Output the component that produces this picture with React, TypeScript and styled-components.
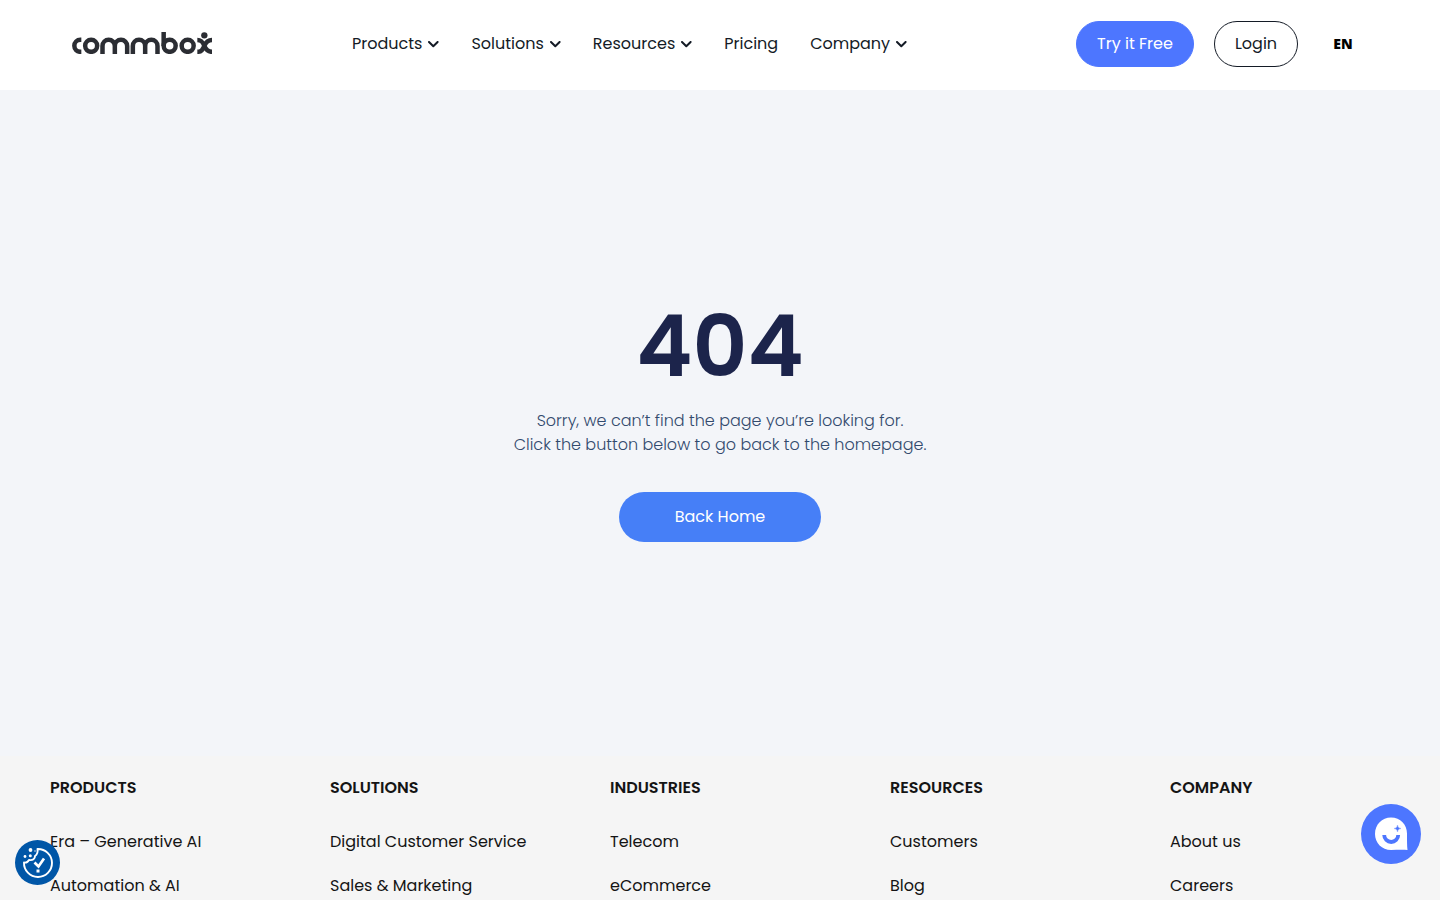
import React from "react";
import styled, { createGlobalStyle } from "styled-components";

const GlobalStyle = createGlobalStyle`
  *, *::before, *::after { box-sizing: border-box; }
  body {
    margin: 0;
    background: #f5f5f5;
    color: #141b26;
    font-family: Poppins, Inter, sans-serif;
    font-size: 16px;
    line-height: 24px;
  }
  a { color: inherit; text-decoration: none; }
  h1, h2, p, ul { margin: 0; padding: 0; }
  ul { list-style: none; }
`;

const Header = styled.header`
  display: flex;
  align-items: center;
  height: 90px;
  padding: 0 72px 2px;
  background: #fff;
`;

const LogoLink = styled.a`
  display: block;
  width: 140px;
  height: 24px;
`;

const Nav = styled.nav`
  margin-left: 140px;
`;

const NavList = styled.ul`
  display: flex;
  gap: 32px;
`;

const NavButton = styled.button`
  display: flex;
  align-items: center;
  gap: 6px;
  padding: 0;
  border: 0;
  background: none;
  color: inherit;
  font: inherit;
  cursor: pointer;
`;

const Actions = styled.div`
  display: flex;
  align-items: center;
  gap: 20px;
  margin-left: auto;
`;

const PillLink = styled.a<{ $filled?: boolean }>`
  display: flex;
  align-items: center;
  justify-content: center;
  height: 46px;
  width: ${(p) => (p.$filled ? 118 : 84)}px;
  border: 1px solid ${(p) => (p.$filled ? "#4d76ff" : "#141b26")};
  border-radius: 23px;
  background: ${(p) => (p.$filled ? "#4d76ff" : "#fff")};
  color: ${(p) => (p.$filled ? "#fff" : "#141b26")};
`;

const LanguageLink = styled.a`
  width: 50px;
  color: #000;
  font: 900 14px/24px "Noto Sans", sans-serif;
  text-align: center;
`;

const Main = styled.main`
  display: flex;
  flex-direction: column;
  align-items: center;
  justify-content: center;
  min-height: 666px;
  padding: 40px 20px;
  background: #f3f5f9;
  text-align: center;
`;

const Code = styled.h1`
  color: #1c244b;
  font-size: 85px;
  font-weight: 600;
  line-height: 85px;
`;

const Message = styled.p`
  margin-top: 20px;
  color: #324a6d;
  font-weight: 300;
`;

const HomeLink = styled.a`
  display: flex;
  align-items: center;
  justify-content: center;
  width: 202px;
  height: 50px;
  margin-top: 35px;
  border-radius: 25px;
  background: #467ff7;
  color: #fff;
`;

const Footer = styled.footer`
  display: grid;
  grid-template-columns: repeat(5, 1fr);
  column-gap: 60px;
  padding: 20px 50px;
  background: #f5f5f5;
  color: #141414;
`;

const FooterTitle = styled.h2`
  font-size: 16px;
  font-weight: 600;
  line-height: 24px;
`;

const FooterList = styled.ul`
  display: flex;
  flex-direction: column;
  gap: 20px;
  margin-top: 30px;
`;

const FloatingButton = styled.button`
  position: fixed;
  padding: 0;
  border: 0;
  border-radius: 50%;
  cursor: pointer;
  svg { display: block; }
`;

const CookieButton = styled(FloatingButton)`
  left: 15px;
  bottom: 15px;
  width: 45px;
  height: 45px;
  background: #0056a7;
`;

const ChatButton = styled(FloatingButton)`
  right: 19px;
  bottom: 36px;
  width: 60px;
  height: 60px;
  background: #4d76ff;
`;

const Logo = () => (
  <svg width="140" height="22" viewBox="36 36 420 66" fill="none" stroke="#2b2d33" strokeWidth="13.500" aria-hidden="true">
    <path d="M64 59.500H61A18 18 0 0 0 61 95.500H64" />
    <circle cx="93.500" cy="77.500" r="18" />
    <path d="M127.500 102V78a18.500 18.500 0 0 1 37 0V102M164.500 78a18.500 18.500 0 0 1 37 0V102" />
    <path d="M218.500 102V78a18.500 18.500 0 0 1 37 0V102M255.500 78a18.500 18.500 0 0 1 37 0V102" />
    <path d="M311 36V78" />
    <circle cx="329" cy="77.500" r="18" />
    <circle cx="383" cy="77.500" r="18" />
    <path d="M412 60C424 60 428 66 433 77.500S444 95.500 456 95.500M456 60C444 60 438 66 433 77.500S424 95.500 412 95.500" />
    <circle cx="433" cy="46" r="9.500" fill="#2b2d33" stroke="none" />
  </svg>
);

const Chevron = () => (
  <svg width="11" height="7" viewBox="0 0 11 7" fill="none" stroke="#141b26" strokeWidth="2" strokeLinecap="round" strokeLinejoin="round" aria-hidden="true">
    <path d="M1 1l4.300 4.300L9.600 1" />
  </svg>
);

const CookieIcon = () => (
  <svg width="45" height="45" viewBox="0 0 45 45" fill="none" aria-hidden="true">
    <path d="M22.500 9A14 14 0 1 1 9 22.500C12 23 13.500 21 14 20C18 20.500 20 19 20 16C23 14 23 12 22.500 9Z" stroke="#fff" strokeWidth="1.900" strokeLinejoin="round" />
    <path d="M19.500 22.500L23.500 26.500L29 18.500" stroke="#fff" strokeWidth="2.700" />
    <path d="M21.500 29.500h3v3h-3z" fill="#fff" />
    <g fill="#fff">
      <circle cx="15.500" cy="10" r="1.900" />
      <circle cx="10" cy="16.500" r="1.400" />
      <circle cx="15.300" cy="15.800" r="1.500" />
      <circle cx="20" cy="11" r="0.700" />
    </g>
  </svg>
);

const ChatIcon = () => (
  <svg width="60" height="60" viewBox="0 0 60 60" aria-hidden="true">
    <path d="M30 13.500C39.500 13.500 46 20.500 46 29.500C46 37 46 42 46.500 46C41 45.500 35 46 30 46C21 46 14 39 14 30C14 20.500 21 13.500 30 13.500Z" fill="#fff" />
    <path d="M23.200 31a7 7 0 0 0 14 0" fill="none" stroke="#4d76ff" strokeWidth="3.800" />
    <path d="M36.500 21Q36.700 24.300 40 24.500Q36.700 24.700 36.500 28Q36.300 24.700 33 24.500Q36.300 24.300 36.500 21Z" fill="#4d76ff" stroke="#4d76ff" strokeWidth="0.300" />
  </svg>
);

const menu = [
  { label: "Products", expands: true },
  { label: "Solutions", expands: true },
  { label: "Resources", expands: true },
  { label: "Pricing", expands: false },
  { label: "Company", expands: true },
];

const columns = [
  { title: "PRODUCTS", links: ["Era – Generative AI", "Automation & AI"] },
  { title: "SOLUTIONS", links: ["Digital Customer Service", "Sales & Marketing"] },
  { title: "INDUSTRIES", links: ["Telecom", "eCommerce"] },
  { title: "RESOURCES", links: ["Customers", "Blog"] },
  { title: "COMPANY", links: ["About us", "Careers"] },
];

export default function App() {
  return (
    <>
      <GlobalStyle />
      <Header>
        <LogoLink href="#" aria-label="commbox"><Logo /></LogoLink>
        <Nav aria-label="Main">
          <NavList>
            {menu.map((item) => (
              <li key={item.label}>
                {item.expands ? (
                  <NavButton type="button">{item.label}<Chevron /></NavButton>
                ) : (
                  <a href="#">{item.label}</a>
                )}
              </li>
            ))}
          </NavList>
        </Nav>
        <Actions>
          <PillLink href="#" $filled>Try it Free</PillLink>
          <PillLink href="#">Login</PillLink>
          <LanguageLink href="#">EN</LanguageLink>
        </Actions>
      </Header>
      <Main>
        <Code>404</Code>
        <Message>
          Sorry, we can’t find the page you’re looking for.<br />
          Click the button below to go back to the homepage.
        </Message>
        <HomeLink href="#">Back Home</HomeLink>
      </Main>
      <Footer>
        {columns.map((column) => (
          <section key={column.title}>
            <FooterTitle>{column.title}</FooterTitle>
            <FooterList>
              {column.links.map((link) => (
                <li key={link}><a href="#">{link}</a></li>
              ))}
            </FooterList>
          </section>
        ))}
      </Footer>
      <CookieButton type="button" aria-label="Cookie preferences"><CookieIcon /></CookieButton>
      <ChatButton type="button" aria-label="Open chat"><ChatIcon /></ChatButton>
    </>
  );
}
